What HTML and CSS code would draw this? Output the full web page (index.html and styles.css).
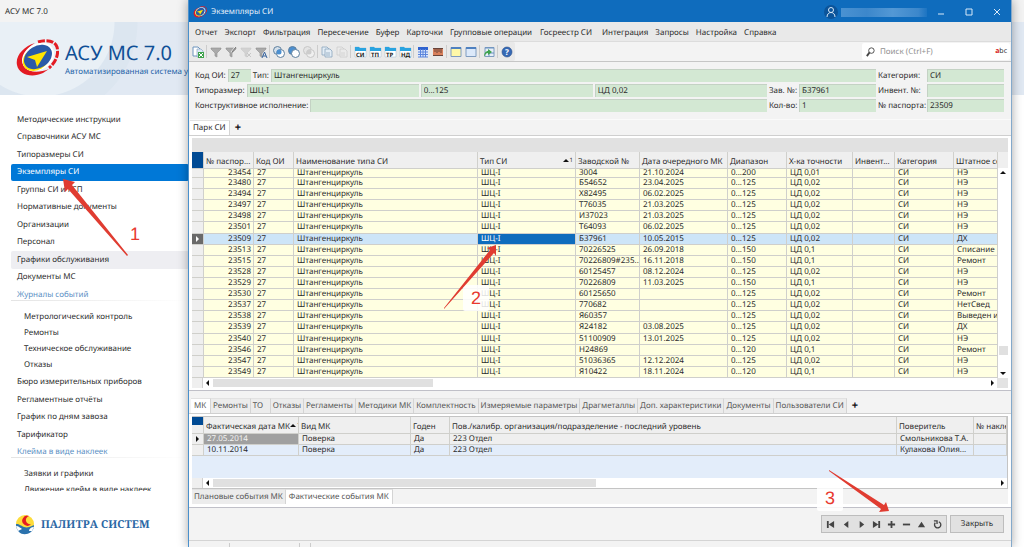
FILE: index.html
```
<!DOCTYPE html>
<html lang="ru">
<head>
  <meta charset="UTF-8">
  <meta name="viewport" content="width=device-width, initial-scale=1.0">
  <title>Экземпляры СИ</title>
  <link rel="stylesheet" href="styles.css">
</head>
<body>
  <!-- Общие символы -->
  <svg class="sprite" aria-hidden="true">
    <symbol id="logo" viewBox="0 0 44 38">
      <path d="M20 4C9 7 0 17 2 26c2 10 15 13 26 8l6-4c-10 4-21 4-25-3C5 20 10 10 20 4z" fill="#e31b23"/>
      <path d="M23 3c9-3 17-1 19 5 2 7-1 15-8 21" fill="none" stroke="#e31b23" stroke-width="3" stroke-dasharray="7 1.500"/>
      <ellipse cx="23" cy="18" rx="17" ry="13" transform="rotate(-32 23 18)" fill="#fff"/>
      <ellipse cx="21" cy="20" rx="14" ry="11" transform="rotate(-32 21 20)" fill="#ffe500"/>
      <ellipse cx="23" cy="18" rx="15" ry="11" transform="rotate(-32 23 18)" fill="#2a5aa8"/>
      <path d="M32 12L12 18l8 3 2 7z" fill="#ffe500"/>
    </symbol>
    <symbol id="funnel" viewBox="0 0 14 14"><path d="M2 3h10v1L8 8v4l-2-1V8L2 4z" fill="#aaa" stroke="#8d8d8d" stroke-width=".6"/></symbol>
    <symbol id="folder" viewBox="0 0 14 14"><path d="M2 2h4l1 1h6v9H2z" fill="#fff" stroke="#9cb8cc" stroke-width=".5"/><path d="M2 2h4l1 1h6v3H2z" fill="#29a3e0"/></symbol>
    <symbol id="page" viewBox="0 0 14 14"><path d="M2 2h5l2 2v6H2z"/><path d="M5 4h5l2 2v6H5z"/><path d="M6 8h4M6 10h4" fill="none"/></symbol>
  </svg>

  <div class="launcher">
    <div class="launcher-title">АСУ МС 7.0</div>
    <header class="banner">
      <svg class="banner-logo"><use href="#logo"/></svg>
      <div>
        <h1>АСУ МС 7.0</h1>
        <p>Автоматизированная система управления</p>
      </div>
    </header>
    <nav class="side-nav">
      <ul>
        <li><a href="#">Методические инструкции</a></li>
        <li><a href="#">Справочники АСУ МС</a></li>
        <li><a href="#">Типоразмеры СИ</a></li>
        <li class="active"><a href="#">Экземпляры СИ</a></li>
        <li><a href="#">Группы СИ и ГСП</a></li>
        <li><a href="#">Нормативные документы</a></li>
        <li><a href="#">Организации</a></li>
        <li><a href="#">Персонал</a></li>
        <li class="hover"><a href="#">Графики обслуживания</a></li>
        <li><a href="#">Документы МС</a></li>
        <li class="category">Журналы событий</li>
        <li class="sub"><a href="#">Метрологический контроль</a></li>
        <li class="sub"><a href="#">Ремонты</a></li>
        <li class="sub"><a href="#">Техническое обслуживание</a></li>
        <li class="sub"><a href="#">Отказы</a></li>
        <li><a href="#">Бюро измерительных приборов</a></li>
        <li><a href="#">Регламентные отчёты</a></li>
        <li><a href="#">График по дням завоза</a></li>
        <li><a href="#">Тарификатор</a></li>
        <li class="category">Клейма в виде наклеек</li>
        <li class="sub"><a href="#">Заявки и графики</a></li>
        <li class="sub"><a href="#">Движение клейм в виде наклеек</a></li>
      </ul>
    </nav>
    <footer class="vendor">
      <svg viewBox="0 0 20 20">
        <circle cx="10" cy="9" r="9" fill="#fddc3a"/>
        <path d="M14 1a5 5 0 1 0 2 8 4 4 0 1 1-2-8z" fill="#e31b23"/>
        <path d="M1 9c4 0 5 2 8 3s6 0 10-2c0 3-1 5-3 7-4 3-9 3-12 0-2-2-3-5-3-8z" fill="#2b72ad"/>
        <path d="M1 11c3 0 4 2 6 3l-4 2zM19 12c-3 0-5 2-5 4l3 0z" fill="#fff"/>
      </svg>
      <span>ПАЛИТРА СИСТЕМ</span>
    </footer>
  </div>

  <main class="window">
    <header class="titlebar">
      <svg class="title-logo"><use href="#logo"/></svg>
      <span class="title-text">Экземпляры СИ</span>
      <span class="avatar"><svg viewBox="0 0 14 14"><circle cx="7" cy="5" r="2.500"/><path d="M3 12c0-6 8-6 8 0"/></svg></span>
      <span class="account"></span>
      <button aria-label="Свернуть"><svg viewBox="0 0 10 10"><path d="M2 7h6"/></svg></button>
      <button aria-label="Развернуть"><svg viewBox="0 0 10 10"><path d="M2 2h6v6H2z"/></svg></button>
      <button aria-label="Закрыть окно"><svg viewBox="0 0 10 10"><path d="M2 2l6 6M8 2l-6 6"/></svg></button>
    </header>

    <nav class="menubar">
      <a href="#">Отчет</a><a href="#">Экспорт</a><a href="#">Фильтрация</a><a href="#">Пересечение</a>
      <a href="#">Буфер</a><a href="#">Карточки</a><a href="#">Групповые операции</a><a href="#" class="wide">Госреестр СИ</a>
      <a href="#">Интеграция</a><a href="#">Запросы</a><a href="#">Настройка</a><a href="#">Справка</a>
    </nav>

    <div class="toolbar">
      <div class="tools">
        <button aria-label="Экспорт в Excel"><svg viewBox="0 0 14 14"><path d="M2 2h5l2 2v7H2z" fill="#fff" stroke="#6d94bd"/><path d="M6 4h4l2 2v6H6z" fill="#dce9f5" stroke="#7898b8" stroke-width=".6"/><path d="M7 7h6v6H7z" fill="#3fa34d"/><path d="M8 8l4 4M12 8l-4 4" stroke="#fff"/></svg></button>
        <i></i>
        <button aria-label="Фильтр"><svg><use href="#funnel"/></svg></button>
        <button aria-label="Изменить фильтр"><svg viewBox="0 0 14 14"><use href="#funnel"/><path d="M7 7l4-5" stroke="#eee"/><path d="M8 7l4-5" stroke="#777"/></svg></button>
        <button aria-label="Снять фильтр" class="dim"><svg viewBox="0 0 14 14"><use href="#funnel"/><path d="M8 8l4 4M12 8l-4 4" stroke="#888"/></svg></button>
        <button aria-label="Автофильтр"><svg viewBox="0 0 14 14"><use href="#funnel"/><path d="M8 13l2.500-6 2.500 6M9 11h3" fill="none" stroke="#35629c"/></svg></button>
        <i></i>
        <button aria-label="Пересечение"><svg viewBox="0 0 14 14"><circle cx="5.500" cy="5.500" r="4" fill="#d5e0ea" stroke="#5d7f9e"/><circle cx="8.500" cy="8.500" r="4" fill="#fff" stroke="#5d7f9e"/><circle cx="7" cy="7" r="2.500" fill="#4b8fd0"/></svg></button>
        <button aria-label="Вычитание"><svg viewBox="0 0 14 14"><circle cx="5.500" cy="5.500" r="4" fill="#4b8fd0" stroke="#5d7f9e"/><circle cx="8.500" cy="8.500" r="4" fill="#fff" stroke="#5d7f9e"/></svg></button>
        <button aria-label="Объединение" class="dim"><svg viewBox="0 0 14 14"><circle cx="5.500" cy="5.500" r="4" fill="#ddd" stroke="#888"/><circle cx="8.500" cy="8.500" r="4" fill="#fff" stroke="#888"/><circle cx="7" cy="7" r="2.500" fill="#999"/></svg></button>
        <i></i>
        <button aria-label="Копировать"><svg fill="#e3edf6" stroke="#8aa5bd" stroke-width=".8"><use href="#page"/></svg></button>
        <button aria-label="Вставить" class="dim"><svg fill="#eee" stroke="#999" stroke-width=".8"><use href="#page"/></svg></button>
        <i></i>
        <button aria-label="Карточка СИ"><svg viewBox="0 0 14 14"><use href="#folder"/><text x="3" y="12">СИ</text></svg></button>
        <button aria-label="Карточка ТП"><svg viewBox="0 0 14 14"><use href="#folder"/><text x="3" y="12">ТП</text></svg></button>
        <button aria-label="Карточка ТР"><svg viewBox="0 0 14 14"><use href="#folder"/><text x="3" y="12">ТР</text></svg></button>
        <button aria-label="Карточка НД"><svg viewBox="0 0 14 14"><use href="#folder"/><text x="3" y="12">НД</text></svg></button>
        <i></i>
        <button aria-label="Календарь"><svg viewBox="0 0 14 14"><path d="M2 2h10v10H2z" fill="#dce7fb"/><path d="M2 2h10v3H2z" fill="#2f62cf"/><path d="M2 7h10M2 9.500h10M4.500 4v8M7 4v8M9.500 4v8M2 12h10" stroke="#5b84dc"/></svg></button>
        <button aria-label="Сетка"><svg viewBox="0 0 14 14"><path d="M2 3h10v8H2z" fill="#d9805c"/><path d="M2 3.500h10M2 10.500h10M4 3v4M6 3v5M8 3v4M10 3v5" stroke="#69443a"/></svg></button>
        <i></i>
        <button aria-label="Заметка"><svg viewBox="0 0 14 14"><path d="M2 2.500h10v9H2z" fill="#fff8a8" stroke="#7f9cc0"/><path d="M2 3h10" stroke="#4f81c0" stroke-width="2"/></svg></button>
        <button aria-label="Окно"><svg viewBox="0 0 14 14"><path d="M2 2.500h10v9H2z" fill="#dce9fa" stroke="#7f9cc0"/><path d="M2 3h10" stroke="#4f81c0" stroke-width="2"/></svg></button>
        <i></i>
        <button aria-label="Переход"><svg viewBox="0 0 14 14"><path d="M3 2.500h9v9H3z" fill="#e6eef8" stroke="#7f9cc0"/><path d="M3 3h9M7 5v6M7 8h5" stroke="#6990c0"/><path d="M2 12c0-4 2-6 4-6V4l4 3-4 3V8c-2 0-3 2-4 4z" fill="#3fa34d"/></svg></button>
        <i></i>
        <button aria-label="Помощь"><svg viewBox="0 0 14 14"><circle cx="7" cy="7" r="5" fill="#3569b5" stroke="#2a4f8a" stroke-width=".6"/><text x="5" y="10" class="help">?</text></svg></button>
      </div>
      <label class="search">
        <svg viewBox="0 0 12 12"><circle cx="7" cy="5" r="3"/><path d="M5 7l-3 4" stroke-width="2"/></svg>
        <input type="text" placeholder="Поиск (Ctrl+F)" aria-label="Поиск">
        <span><b>a</b>bc</span>
      </label>
    </div>

    <form class="card">
      <div class="card-row">
        <label for="code">Код ОИ:</label><input id="code" class="tiny" value="27" readonly>
        <label for="type">Тип:</label><input id="type" class="grow" value="Штангенциркуль" readonly>
        <label for="cat" class="last-label">Категория:</label><input id="cat" class="short" value="СИ" readonly>
      </div>
      <div class="card-row">
        <label for="size">Типоразмер:</label><input id="size" class="grow" value="ШЦ-I" readonly>
        <input class="grow" aria-label="Диапазон" value="0...125" readonly>
        <input class="grow" aria-label="Точность" value="ЦД 0,02" readonly>
        <label for="serial" class="mid-label">Зав. №:</label><input id="serial" class="short" value="Б37961" readonly>
        <label for="inv" class="last-label">Инвент. №:</label><input id="inv" class="short" readonly>
      </div>
      <div class="card-row">
        <label for="design">Конструктивное исполнение:</label><input id="design" class="grow" readonly>
        <label for="qty" class="mid-label">Кол-во:</label><input id="qty" class="short" value="1" readonly>
        <label for="pass" class="last-label">№ паспорта:</label><input id="pass" class="short" value="23509" readonly>
      </div>
    </form>

    <div class="tabs park-tabs">
      <button class="current">Парк СИ</button><button class="add">+</button>
    </div>
    <section class="panel park">
      <div class="group-bar"></div>
      <div class="grid-area">
        <table class="grid park-grid">
          <colgroup>
            <col class="w-mark"><col class="w-pass"><col class="w-code"><col><col class="w-type"><col class="w-serial">
            <col class="w-date"><col class="w-cat"><col class="w-acc"><col class="w-inv"><col class="w-cat"><col class="w-state">
          </colgroup>
          <thead>
            <tr>
              <th class="corner"></th><th>№ паспор...</th><th>Код ОИ</th><th>Наименование типа СИ</th>
              <th><span class="sorted">Тип СИ<span class="sort"></span></span></th>
              <th>Заводской №</th><th>Дата очередного МК</th><th>Диапазон</th><th>Х-ка точности</th>
              <th>Инвент...</th><th>Категория</th><th>Штатное состояние</th>
            </tr>
          </thead>
          <tbody id="park-rows"></tbody>
        </table>
        <div class="vscroll">
          <span class="head"></span><span class="arrow up"></span><span class="thumb"></span><span class="arrow down"></span>
        </div>
      </div>
      <div class="hscroll">
        <span class="cap"></span><span class="arrow left"></span><span class="thumb park-thumb"></span><span class="arrow right"></span><span class="box"></span>
      </div>
    </section>

    <div class="tabs detail-tabs">
      <button class="current">МК</button><button>Ремонты</button><button>ТО</button><button>Отказы</button><button>Регламенты</button><button>Методики МК</button><button>Комплектность</button><button>Измеряемые параметры</button><button>Драгметаллы</button><button>Доп. характеристики</button><button>Документы</button><button>Пользователи СИ</button><button class="add">+</button>
    </div>
    <section class="panel detail">
      <div class="detail-body">
        <table class="grid detail-grid">
          <colgroup>
            <col class="w-mark"><col class="w-fact"><col class="w-kind"><col class="w-ok"><col><col class="w-who"><col class="w-label">
          </colgroup>
          <thead>
            <tr>
              <th class="corner"></th><th><span class="sorted">Фактическая дата МК<span class="sort"></span></span></th><th>Вид МК</th><th>Годен</th>
              <th>Пов./калибр. организация/подразделение - последний уровень</th><th>Поверитель</th><th>№ наклейки</th>
            </tr>
          </thead>
          <tbody>
            <tr class="focused"><td class="mark"><span class="arrow right"></span></td><td class="cell-focus">27.05.2014</td><td>Поверка</td><td>Да</td><td>223 Отдел</td><td>Смольникова Т.А.</td><td></td></tr>
            <tr><td class="mark"></td><td>10.11.2014</td><td>Поверка</td><td>Да</td><td>223 Отдел</td><td>Кулакова Юлия...</td><td></td></tr>
          </tbody>
        </table>
        <div class="hscroll">
          <span class="cap"></span><span class="arrow left"></span><span class="thumb detail-thumb"></span><span class="arrow right"></span>
        </div>
      </div>
      <div class="tabs bottom-tabs">
        <button>Плановые события МК</button><button class="current">Фактические события МК</button>
      </div>
    </section>

    <footer class="actions">
      <div class="navigator">
        <button aria-label="Первая"><svg viewBox="0 0 10 10"><path d="M1 1h2v8H1zM9 1v8L3 5z"/></svg></button>
        <button aria-label="Предыдущая"><svg viewBox="0 0 10 10"><path d="M7 1v8L2 5z"/></svg></button>
        <button aria-label="Следующая"><svg viewBox="0 0 10 10"><path d="M3 1v8l5-4z"/></svg></button>
        <button aria-label="Последняя"><svg viewBox="0 0 10 10"><path d="M7 1h2v8H7zM1 1v8l6-4z"/></svg></button>
        <button aria-label="Добавить"><svg viewBox="0 0 10 10"><path d="M4 1h2v3h3v2H6v3H4V6H1V4h3z"/></svg></button>
        <button aria-label="Удалить"><svg viewBox="0 0 10 10"><path d="M1 4h8v2H1z"/></svg></button>
        <button aria-label="Изменить"><svg viewBox="0 0 10 10"><path d="M5 2l4 6H1z"/></svg></button>
        <button aria-label="Обновить"><svg viewBox="0 0 10 10"><path d="M6.500 2A3.500 3.500 0 1 1 2.500 3M1 1h3.500v3.500" fill="none" stroke="#444" stroke-width="1.500"/></svg></button>
      </div>
      <button class="close">Закрыть</button>
    </footer>
    <div class="statusbar"><span></span><span></span><span></span></div>
  </main>

  <!-- Шаги инструкции -->
  <div class="step step-1">
    <svg viewBox="0 0 68 80"><path d="M66 78L7 11l-3 3L2 1l12 3-3 3 56 70z"/></svg>
    <span>1</span>
  </div>
  <div class="step step-2">
    <svg viewBox="0 0 54 66"><path d="M1 65L51 9l2 3V1l-9 3 3 2L1 64z"/></svg>
    <span>2</span>
  </div>
  <div class="step step-3">
    <svg viewBox="0 0 62 44"><path d="M1 1l52 38-2 3 10-1-3-9-2 3L1 0z"/></svg>
    <span>3</span>
  </div>

  <script>
    const parkRows = document.getElementById("park-rows");

    // паспорт, заводской №, дата очередного МК, диапазон, точность, состояние
    const instruments = [
      ["23454", "3004", "21.10.2024", "0...200", "ЦД 0,01", "НЭ"],
      ["23480", "Б54652", "23.04.2025", "0...125", "ЦД 0,02", "НЭ"],
      ["23494", "Х82495", "06.02.2025", "0...125", "ЦД 0,02", "НЭ"],
      ["23497", "Т76035", "21.03.2025", "0...125", "ЦД 0,02", "НЭ"],
      ["23498", "И37023", "21.03.2025", "0...125", "ЦД 0,02", "НЭ"],
      ["23501", "Т64093", "06.02.2025", "0...125", "ЦД 0,02", "НЭ"],
      ["23509", "Б37961", "10.05.2015", "0...125", "ЦД 0,02", "ДХ"],
      ["23513", "70226525", "26.09.2018", "0...150", "ЦД 0,1", "Списание"],
      ["23515", "70226809#235...", "16.11.2018", "0...150", "ЦД 0,1", "Ремонт"],
      ["23528", "60125457", "08.12.2024", "0...125", "ЦД 0,02", "НЭ"],
      ["23529", "70226809", "11.03.2025", "0...150", "ЦД 0,1", "НЭ"],
      ["23530", "60125650", "", "0...125", "ЦД 0,02", "Ремонт"],
      ["23537", "770682", "", "0...125", "ЦД 0,02", "НетСвед"],
      ["23538", "Я60357", "", "0...125", "ЦД 0,02", "Выведен из"],
      ["23539", "Я24182", "03.08.2025", "0...125", "ЦД 0,02", "ДХ"],
      ["23540", "51100909", "13.01.2025", "0...125", "ЦД 0,02", "НЭ"],
      ["23546", "Н24869", "", "0...120", "ЦД 0,1", "Ремонт"],
      ["23547", "51036365", "12.12.2024", "0...125", "ЦД 0,02", "НЭ"],
      ["23549", "Я10422", "18.11.2024", "0...120", "ЦД 0,1", "НЭ"],
    ];

    instruments.forEach(([pass, serial, date, range, accuracy, state]) => {
      const row = document.createElement("tr");
      const selected = pass === "23509";
      row.classList.toggle("selected", selected);

      ["", pass, "27", "Штангенциркуль", "ШЦ-I", serial, date, range, accuracy, "", "СИ", state].forEach((text, i) => {
        const cell = document.createElement("td");
        cell.textContent = text;
        if (i === 0) {
          cell.classList.add("mark");
          if (selected) cell.innerHTML = '<span class="arrow right"></span>';
        }
        if (i === 1) cell.classList.add("num");
        if (i === 4 && selected) cell.classList.add("cell-focus");
        row.appendChild(cell);
      });

      parkRows.appendChild(row);
    });
  </script>
</body>
</html>
```

FILE: styles.css
```
* {
  box-sizing: border-box;
}

body {
  margin: 0;
  height: 100vh;
  overflow: hidden;
  position: relative;
  background-color: #ffffff;
  font-family: "Noto Sans", sans-serif;
  font-size: 8px;
  line-height: 10px;
  text-rendering: geometricPrecision;
  color: #2b2b2b;
}

button,
input {
  font: inherit;
  color: inherit;
  text-rendering: inherit;
  margin: 0;
  padding: 0;
  border: none;
  background: none;
  outline: none;
}

a {
  color: inherit;
  text-decoration: none;
}

svg {
  display: block;
}

.sprite {
  position: absolute;
  width: 0;
  height: 0;
}

/* Главное окно */
.launcher {
  height: 100%;
  display: flex;
  flex-direction: column;
}

.launcher-title {
  height: 22px;
  padding: 7px 5px 5px;
  background-color: #f3f3f3;
}

.banner {
  height: 73px;
  display: flex;
  gap: 6px;
  padding: 17px 15px 0;
  background: radial-gradient(circle at 40px 0, #e9f0f6 74px, #dce6f0 75px, #dce6f0 97px, #e1e9f3 98px);
}

.banner-logo {
  width: 44px;
  height: 38px;
}

.banner h1 {
  margin: 0;
  font-size: 20px;
  line-height: 28px;
  font-weight: 400;
  color: #0f4f96;
}

.banner p {
  margin: 0;
  color: #2463a8;
  white-space: nowrap;
}

.side-nav {
  flex: 1;
  min-height: 0;
  width: 189px;
  margin-top: 16px;
  overflow: hidden;
}

.side-nav ul {
  list-style: none;
  margin: 0;
  padding: 0 0 0 11px;
  height: calc(100% + 7px);
  display: flex;
  flex-direction: column;
}

.side-nav li {
  flex: 54 0 0;
  min-height: 0;
  display: flex;
  align-items: center;
  padding-left: 6px;
  border-radius: 2px;
}

.side-nav .sub {
  flex-grow: 50;
  padding-left: 13px;
}

.side-nav .category {
  flex-grow: 57;
  align-items: flex-start;
  padding-top: 4px;
  color: #5b8fc4;
  background: linear-gradient(90deg, #e4e4e4, #ffffff) 0 14px / 100% 1px no-repeat;
}

.side-nav .active {
  background-color: #0078d7;
  color: #ffffff;
}

.side-nav .hover {
  background-color: #eeeef2;
}

.vendor {
  height: 56px;
  display: flex;
  align-items: center;
  gap: 6px;
  padding: 12px 15px 0;
  font-family: "Noto Serif", "Liberation Serif", serif;
  font-size: 11px;
  font-weight: 700;
  color: #2b68a5;
}

.vendor svg {
  width: 20px;
  height: 20px;
}

/* Окно экземпляров */
.window {
  position: absolute;
  top: 0;
  right: 12px;
  bottom: 0;
  left: 188px;
  display: flex;
  flex-direction: column;
  background-color: #f3f3f3;
  border-left: 1px solid #4a90cc;
  border-right: 1px solid #84a9cb;
  box-shadow: 0 0 10px rgba(0, 0, 0, 0.35);
}

.titlebar {
  height: 22px;
  display: flex;
  align-items: center;
  padding: 2px 0 0 4px;
  background-color: #0f6cbd;
  color: #e6f0fa;
}

.title-logo {
  width: 14px;
  height: 12px;
}

.title-text {
  flex: 1;
  padding-left: 4px;
}

.avatar {
  width: 14px;
  height: 14px;
  border-radius: 50%;
  background-color: #0b549a;
}

.avatar svg,
.titlebar button svg {
  fill: none;
  stroke: #d9e9f8;
}

.avatar svg {
  width: 14px;
  height: 14px;
}

.account {
  width: 86px;
  height: 9px;
  margin: 0 0 0 3px;
  background: linear-gradient(90deg, #4a92d2, #3c87cb 30%, #5398d5 60%, #3c87cb 90%, #1c74c2);
}

.titlebar button {
  width: 28px;
}

.titlebar button svg {
  width: 10px;
  height: 10px;
  margin: 0 auto;
}

.menubar {
  height: 20px;
  display: flex;
  align-items: center;
  gap: 7px;
  padding: 3px 6px 0;
  background-color: #e9e9e9;
  border-bottom: 1px solid #dcdcdc;
  white-space: nowrap;
}

.menubar .wide {
  margin: 0 3px 0 1px;
}

.toolbar {
  height: 20px;
  display: flex;
  justify-content: space-between;
  border-bottom: 1px solid #c6c6c6;
}

.tools {
  display: flex;
  align-items: center;
  padding: 0 1px;
  background-color: #e9e9e9;
  border-radius: 0 2px 2px 0;
}

.tools button {
  width: 15px;
}

.tools svg {
  width: 14px;
  height: 14px;
  margin: 0 auto;
}

.tools i {
  width: 1px;
  height: 13px;
  margin: 0 1px;
  background-color: #cccccc;
}

.tools .dim {
  opacity: 0.35;
}

.tools text {
  font-size: 6px;
  font-weight: 700;
  fill: #222222;
}

.tools .help {
  font-size: 8px;
  fill: #ffffff;
}

.search {
  width: 148px;
  height: 17px;
  margin: 1px 1px 0 0;
  display: flex;
  align-items: center;
  gap: 4px;
  padding: 0 3px;
  background-color: #ffffff;
  border-radius: 2px;
}

.search svg {
  width: 11px;
  height: 11px;
  fill: none;
  stroke: #444444;
}

.search input {
  flex: 1;
  min-width: 0;
}

.search input::placeholder {
  color: #909090;
}

.search span {
  font-size: 7px;
}

.search b {
  color: #d81e1e;
}

/* Карточка */
.card {
  display: flex;
  flex-direction: column;
  gap: 2px;
  padding: 7px 7px 7px 6px;
  border-bottom: 1px solid #fafafa;
}

.card-row {
  display: flex;
  align-items: center;
  gap: 2px;
  white-space: nowrap;
}

.card input {
  height: 13px;
  min-width: 0;
  padding: 0 2px 1px;
  background-color: #d3e8d3;
  border-top: 1px solid #c4d2c4;
  border-left: 1px solid #c4d2c4;
}

.card .grow {
  flex: 1;
}

.card .tiny {
  width: 23px;
}

.card .short {
  width: 77px;
}

.mid-label {
  width: 28px;
}

.last-label {
  width: 47px;
}

/* Вкладки */
.tabs {
  display: flex;
  white-space: nowrap;
}

.tabs button {
  padding: 0 2px;
  min-width: 20px;
  text-align: left;
  background-color: #ececec;
  border-right: 1px solid #d4d4d4;
  border-top: 1px solid #e2e2e2;
  color: #555555;
}

.tabs .current {
  padding: 0 3px;
  background-color: #ffffff;
}

.tabs .add {
  padding: 0 5px;
  background: none;
  border-color: transparent;
  font-size: 11px;
  font-weight: 700;
  color: #111111;
}

.park-tabs {
  height: 15px;
  padding-left: 1px;
}

.park-tabs .current {
  color: #2b2b2b;
}

.panel {
  padding: 2px;
  background-color: #ffffff;
  border-top: 1px solid #cfcfcf;
  border-bottom: 1px solid #c0c0c8;
}

.park {
  flex: 1;
  min-height: 0;
  display: flex;
  flex-direction: column;
  padding: 2px 3px;
}

.group-bar {
  height: 14px;
  background-color: #e1e1e1;
}

.grid-area {
  flex: 1;
  min-height: 0;
  display: flex;
}

/* Таблицы */
.grid {
  width: 100%;
  table-layout: fixed;
  border-collapse: separate;
  border-spacing: 0;
}

.grid th,
.grid td {
  padding: 0 3px;
  overflow: hidden;
  white-space: nowrap;
  text-align: left;
  vertical-align: middle;
  border-right: 1px solid #d0d0cc;
  border-bottom: 1px solid #cfcfcb;
}

.grid th {
  height: 17px;
  padding: 3px 2px 0;
  font-weight: 400;
  background-color: #efefef;
}

.grid .corner {
  background: linear-gradient(#004a94 47%, #5e8fc0 47%, #5e8fc0 53%, #004a94 53%);
}

.grid .mark {
  padding: 0;
  background-color: #efefef;
}

.grid .num {
  padding-right: 2px;
  text-align: right;
}

.park-grid {
  flex: 1;
  min-width: 0;
  height: 100%;
}

.park-grid td {
  background-color: #ffffe1;
}

/* верхняя строка прокручена под заголовок */
.park-grid tbody tr:first-child td {
  height: 9px;
  line-height: 8px;
}

.park-grid .selected td {
  background-color: #cde5f8;
}

.park-grid .selected .mark {
  background-color: #6a6a6a;
}

.park-grid .selected .cell-focus {
  background-color: #0f6cbd;
  color: #ffffff;
}

.sorted {
  display: flex;
  justify-content: space-between;
}

.sort {
  display: flex;
  align-items: flex-start;
  font-size: 6px;
  line-height: 6px;
}

.sort::before {
  content: "";
  margin: 2px 1px 0 0;
  border: 3px solid transparent;
  border-top: none;
  border-bottom: 3px solid #111111;
}

.sort::after {
  content: "1";
}

.w-mark { width: 12px; }
.w-pass { width: 50px; }
.w-code { width: 40px; }
.w-type { width: 98px; }
.w-serial { width: 64px; }
.w-date { width: 88px; }
.w-acc { width: 66px; }
.w-inv { width: 42px; }
.w-cat { width: 59px; }
.w-state { width: 44px; }
.w-fact { width: 95px; }
.w-kind { width: 112px; }
.w-ok { width: 39px; }
.w-who { width: 77px; }
.w-label { width: 33px; }

.detail-grid .sorted {
  justify-content: flex-start;
}

/* Полосы прокрутки */
.arrow {
  width: 0;
  height: 0;
  border: 3px solid transparent;
}

.arrow.up { border-top: none; border-bottom: 3px solid #111111; }
.arrow.down { border-bottom: none; border-top: 3px solid #111111; }
.arrow.left { border-left: none; border-right: 3px solid #111111; }
.arrow.right { border-right: none; border-left: 3px solid #111111; }

.mark .arrow {
  display: block;
  margin: 0 auto;
}

.selected .mark .arrow {
  border-left-color: #ffffff;
}

.vscroll {
  width: 10px;
  display: flex;
  flex-direction: column;
  align-items: center;
}

.vscroll .head {
  width: 100%;
  height: 16px;
  margin-bottom: 3px;
  background-color: #efefef;
}

.vscroll .thumb {
  width: 9px;
  height: 9px;
  margin: auto 0 17px;
  background-color: #e0e0e0;
}

.vscroll .down {
  margin-bottom: 3px;
}

.hscroll {
  height: 10px;
  display: flex;
  align-items: center;
  background-color: #ffffff;
}

.hscroll .cap,
.hscroll .box {
  width: 11px;
  height: 10px;
  background-color: #efefef;
  border-right: 1px solid #d0d0d0;
}

.hscroll .box {
  background-color: #e3e3e3;
  border: none;
}

.hscroll .left {
  margin: 0 4px 0 3px;
}

.hscroll .thumb {
  height: 8px;
  background-color: #e0e0e0;
}

.hscroll .right {
  margin: 0 3px 0 auto;
}

.park-thumb {
  width: 27%;
}

.detail-thumb {
  width: 47%;
}

/* Детализация */
.detail-tabs {
  height: 15px;
  margin-top: 7px;
  padding-left: 2px;
}

.detail {
  padding: 2px 3px 3px;
}

.detail-body {
  border: 1px solid #c4c4c4;
  border-left: none;
  background-color: #e3edfa;
}

.detail .corner {
  background: linear-gradient(#004a94 50%, #efefef 50%);
}

.detail-grid .focused td {
  background-color: #efefef;
}

.detail-grid .focused .cell-focus {
  background-color: #a0a0a0;
  color: #f3f3f3;
}

.detail .hscroll {
  margin-top: 22px;
}

.bottom-tabs {
  height: 15px;
  background-color: #f3f3f3;
}

/* Нижняя панель */
.actions {
  height: 32px;
  display: flex;
  align-items: center;
  justify-content: flex-end;
  gap: 3px;
  padding-right: 7px;
}

.navigator {
  height: 18px;
  display: flex;
  align-items: center;
  background-color: #e1e1e1;
  border: 1px solid #bdbdbd;
}

.navigator button {
  width: 15px;
  padding: 0 3px;
}

.navigator button:first-child,
.navigator button:last-child {
  width: 17px;
  padding: 0 4px;
}

.navigator svg {
  width: 9px;
  height: 9px;
  fill: #444444;
}

.close {
  width: 54px;
  height: 18px;
  background-color: #e1e1e1;
  border: 1px solid #bdbdbd;
}

.statusbar {
  height: 7px;
  display: flex;
  padding-top: 2px;
  border-top: 1px solid #d4d4d4;
}

.statusbar span {
  width: 11px;
  border-right: 1px solid #cccccc;
}

.statusbar span:first-child {
  width: 41px;
}

.statusbar span:nth-child(2) {
  width: 70px;
}

/* Красные указатели поверх окон */
.step {
  position: absolute;
  font-family: "Liberation Sans", sans-serif;
  font-size: 18px;
  line-height: 26px;
  color: #e8392e;
}

.step svg {
  position: absolute;
  fill: #e03c31;
}

.step span {
  display: block;
  width: 26px;
  text-align: center;
  background-color: rgba(255, 255, 255, 0.85);
  border-radius: 2px;
}

.step-1 {
  top: 221px;
  left: 122px;
}

.step-1 svg {
  top: -43px;
  left: -61px;
  width: 68px;
  height: 80px;
}

.step-2 {
  top: 285px;
  left: 463px;
}

.step-2 svg {
  top: -41px;
  left: -20px;
  width: 54px;
  height: 66px;
}

.step-3 {
  right: 181px;
  bottom: 36px;
}

.step-3 svg {
  top: -15px;
  left: 11px;
  width: 62px;
  height: 44px;
}
```
